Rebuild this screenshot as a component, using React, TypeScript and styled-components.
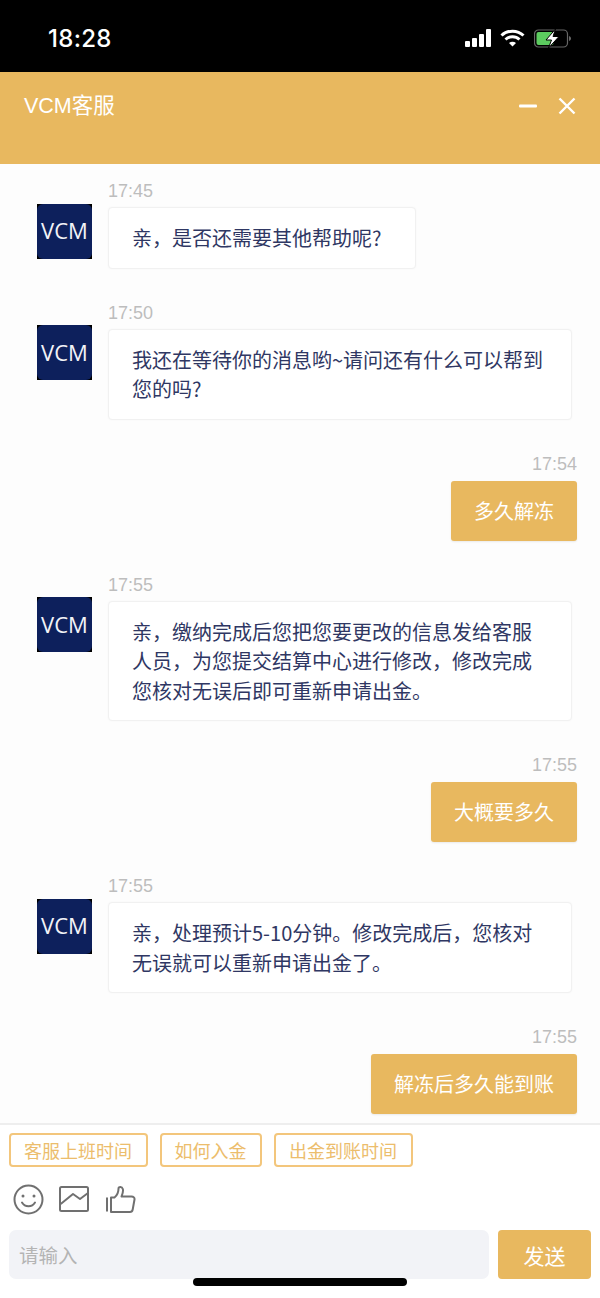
import React from 'react';
import styled, { createGlobalStyle } from 'styled-components';

const CJK = `"Noto Sans CJK SC", "Noto Sans", sans-serif`;
const GOLD = '#e8b85f';

const GlobalStyle = createGlobalStyle`
  html, body {
    margin: 0;
    padding: 0;
    background: #fff;
  }
  * {
    box-sizing: border-box;
  }
`;

const Page = styled.div`
  position: relative;
  width: 600px;
  height: 1298px;
  display: flex;
  flex-direction: column;
  overflow: hidden;
  font-family: "Liberation Sans", ${CJK};
`;

const StatusBar = styled.div`
  height: 72px;
  background: #000;
  display: flex;
  align-items: center;
  justify-content: space-between;
  padding: 4px 28px 0 48px;
`;

const Clock = styled.span`
  color: #fff;
  font: 500 24px Inter, Roboto, sans-serif;
  letter-spacing: 0.3px;
`;

const StatusIcons = styled.div`
  display: flex;
  align-items: center;
  gap: 9px;
`;

const Header = styled.div`
  height: 92px;
  background: ${GOLD};
  display: flex;
  align-items: flex-start;
  justify-content: space-between;
  padding: 18px 24px 0;
`;

const Title = styled.span`
  color: #fff;
  font-size: 21.5px;
  line-height: 32px;
`;

const HeaderActions = styled.div`
  display: flex;
  align-items: center;
  gap: 21px;
  height: 31px;
`;

const Messages = styled.div`
  flex: 1;
  background: #fdfdfd;
  padding-top: 17px;
  overflow: hidden;
`;

const Message = styled.div<{ $mine?: boolean }>`
  display: flex;
  justify-content: ${({ $mine }) => ($mine ? 'flex-end' : 'flex-start')};
  padding: ${({ $mine }) => ($mine ? '0 23px 0 0' : '0 0 0 37px')};
  margin-bottom: 34px;
`;

const Avatar = styled.div`
  width: 55px;
  height: 55px;
  margin: 22.5px 16px 0 0;
  background: #000;
  flex: none;
`;

const AvatarFace = styled.div`
  width: 100%;
  height: 100%;
  padding-bottom: 2px;
  border-radius: 6px;
  background: #0d205c;
  color: #f2f3f7;
  display: flex;
  align-items: center;
  justify-content: center;
  font: 22px "Open Sans", sans-serif;
`;

const Body = styled.div<{ $mine?: boolean }>`
  display: flex;
  flex-direction: column;
  align-items: ${({ $mine }) => ($mine ? 'flex-end' : 'flex-start')};
`;

const Time = styled.div<{ $mine?: boolean }>`
  color: #bdbdbd;
  font-size: 18px;
  line-height: 20px;
  margin-bottom: ${({ $mine }) => ($mine ? '7px' : '6px')};
`;

const Bubble = styled.div`
  min-width: 308px;
  max-width: 464px;
  padding: 15px 27px 15px 23px;
  background: #fff;
  border: 1px solid #f1f1f1;
  border-radius: 4px;
  box-shadow: 0 0 2px rgba(0, 0, 0, 0.04);
  color: #2f3763;
  font-family: ${CJK};
  font-size: 20px;
  line-height: 29.5px;
`;

const MineBubble = styled.div`
  padding: 15px 23px;
  background: ${GOLD};
  border-radius: 3px;
  box-shadow: 0 1px 2px rgba(0, 0, 0, 0.08);
  color: #fff;
  font-family: ${CJK};
  font-size: 20px;
  line-height: 30px;
`;

const Footer = styled.div`
  height: 175px;
  flex: none;
  background: #fff;
  border-top: 2px solid #eee;
  padding: 8px 9px 0;
`;

const Chips = styled.div`
  display: flex;
  gap: 12px;
`;

const Chip = styled.span`
  height: 34px;
  padding: 0 13.5px 0 13px;
  display: flex;
  align-items: center;
  border: 2px solid #f3c67c;
  border-radius: 4px;
  color: #ecbd6c;
  font-family: ${CJK};
  font-size: 18px;
`;

const Tools = styled.div`
  display: flex;
  align-items: center;
  height: 30px;
  margin-top: 17px;
  padding-left: 4px;
  gap: 15px;
`;

const InputRow = styled.div`
  display: flex;
  gap: 9px;
  margin-top: 16px;
`;

const InputBox = styled.div`
  flex: 1;
  height: 49px;
  display: flex;
  align-items: center;
  padding-left: 10px;
  background: #f2f3f7;
  border-radius: 7px;
  color: #b4b4b4;
  font-family: ${CJK};
  font-size: 19.5px;
`;

const SendButton = styled.div`
  width: 93px;
  height: 49px;
  display: flex;
  align-items: center;
  justify-content: center;
  background: ${GOLD};
  border-radius: 4px;
  color: #fff;
  font-family: ${CJK};
  font-size: 21px;
`;

const HomeIndicator = styled.div`
  position: absolute;
  left: 193px;
  bottom: 12px;
  width: 214px;
  height: 8px;
  border-radius: 4px;
  background: #000;
`;

const SignalIcon = () => (
  <svg width="26" height="18" viewBox="0 0 26 18" fill="#fff">
    <rect x="0" y="12" width="5" height="6" rx="1" />
    <rect x="7" y="9" width="5" height="9" rx="1" />
    <rect x="14" y="5" width="5" height="13" rx="1" />
    <rect x="21" y="0" width="5" height="18" rx="1" />
  </svg>
);

const WifiIcon = () => (
  <svg width="25" height="18" viewBox="0 0 25 18" fill="none" stroke="#fff" strokeWidth="3">
    <path d="M1.5 6.5C7.5 0.7 17.5 0.7 23.5 6.5" />
    <path d="M5.5 10.5C9.5 6.8 15.5 6.8 19.5 10.5" />
    <path d="M12.5 17.5L9 13.9C11 12.4 14 12.4 16 13.9Z" fill="#fff" stroke="none" />
  </svg>
);

const BatteryIcon = () => (
  <svg width="38" height="19" viewBox="0 0 38 19">
    <rect x="0.5" y="1" width="33" height="17" rx="4" fill="none" stroke="#666" strokeWidth="1.2" />
    <rect x="2.5" y="3" width="17" height="13" rx="2" fill="#5ccb5f" />
    <path d="M35 7v5c1.4-.4 2-1.4 2-2.5S36.4 7.4 35 7z" fill="#666" />
    <path d="M21.5 0L12 11h5.5L14.5 19 25 7.5h-6z" fill="#fff" stroke="#000" strokeWidth="1" />
  </svg>
);

const MinimizeIcon = () => (
  <svg width="18" height="4" viewBox="0 0 18 4">
    <rect width="18" height="3" y="0.5" rx="1" fill="#fff" />
  </svg>
);

const CloseIcon = () => (
  <svg width="18" height="18" viewBox="0 0 18 18" stroke="#fff" strokeWidth="2.4">
    <path d="M1.5 1.5l15 15M16.5 1.5l-15 15" />
  </svg>
);

const SmileIcon = () => (
  <svg width="31" height="31" viewBox="0 0 31 31" fill="none" stroke="#707070" strokeWidth="2">
    <circle cx="15.5" cy="15.5" r="14" />
    <circle cx="10" cy="12" r="1.5" fill="#707070" stroke="none" />
    <circle cx="21" cy="12" r="1.5" fill="#707070" stroke="none" />
    <path d="M9 18.5c3 5 10 5 13 0" strokeLinecap="round" />
  </svg>
);

const ImageIcon = () => (
  <svg width="30" height="26" viewBox="0 0 30 26" fill="none" stroke="#707070" strokeWidth="2">
    <rect x="1" y="1" width="28" height="24" rx="1.5" />
    <path d="M1.7 18L14 8l7 5 8-6" strokeLinejoin="round" />
  </svg>
);

const ThumbIcon = () => (
  <svg width="32" height="27" viewBox="-2 0 32 27" fill="none" stroke="#707070" strokeWidth="2">
    <path d="M1 11.5v14" />
    <path d="M5 11.5h3.5c2.5-2 4-5.5 4-9 0-2 3.5-2 4.3 0.5 0.8 2.5-0.3 5-1.3 7.5h10c2 0 3.300 1.300 3 3l-1.800 10c-0.300 1.500-1.200 2.500-2.700 2.500H5z" strokeLinejoin="round" />
  </svg>
);

type ChatMessage = { time: string; text: string; mine?: boolean };

const messages: ChatMessage[] = [
  { time: '17:45', text: '亲，是否还需要其他帮助呢?' },
  { time: '17:50', text: '我还在等待你的消息哟~请问还有什么可以帮到您的吗?' },
  { time: '17:54', text: '多久解冻', mine: true },
  { time: '17:55', text: '亲，缴纳完成后您把您要更改的信息发给客服人员，为您提交结算中心进行修改，修改完成您核对无误后即可重新申请出金。' },
  { time: '17:55', text: '大概要多久', mine: true },
  { time: '17:55', text: '亲，处理预计5-10分钟。修改完成后，您核对无误就可以重新申请出金了。' },
  { time: '17:55', text: '解冻后多久能到账', mine: true },
];

const quickReplies = ['客服上班时间', '如何入金', '出金到账时间'];

const App = () => (
  <Page>
    <GlobalStyle />
    <StatusBar>
      <Clock>18:28</Clock>
      <StatusIcons>
        <SignalIcon />
        <WifiIcon />
        <BatteryIcon />
      </StatusIcons>
    </StatusBar>
    <Header>
      <Title>VCM客服</Title>
      <HeaderActions>
        <MinimizeIcon />
        <CloseIcon />
      </HeaderActions>
    </Header>
    <Messages>
      {messages.map((message, index) => (
        <Message key={index} $mine={message.mine}>
          {!message.mine && (
            <Avatar>
              <AvatarFace>VCM</AvatarFace>
            </Avatar>
          )}
          <Body $mine={message.mine}>
            <Time $mine={message.mine}>{message.time}</Time>
            {message.mine ? <MineBubble>{message.text}</MineBubble> : <Bubble>{message.text}</Bubble>}
          </Body>
        </Message>
      ))}
    </Messages>
    <Footer>
      <Chips>
        {quickReplies.map((reply) => (
          <Chip key={reply}>{reply}</Chip>
        ))}
      </Chips>
      <Tools>
        <SmileIcon />
        <ImageIcon />
        <ThumbIcon />
      </Tools>
      <InputRow>
        <InputBox>请输入</InputBox>
        <SendButton>发送</SendButton>
      </InputRow>
    </Footer>
    <HomeIndicator />
  </Page>
);

export default App;
